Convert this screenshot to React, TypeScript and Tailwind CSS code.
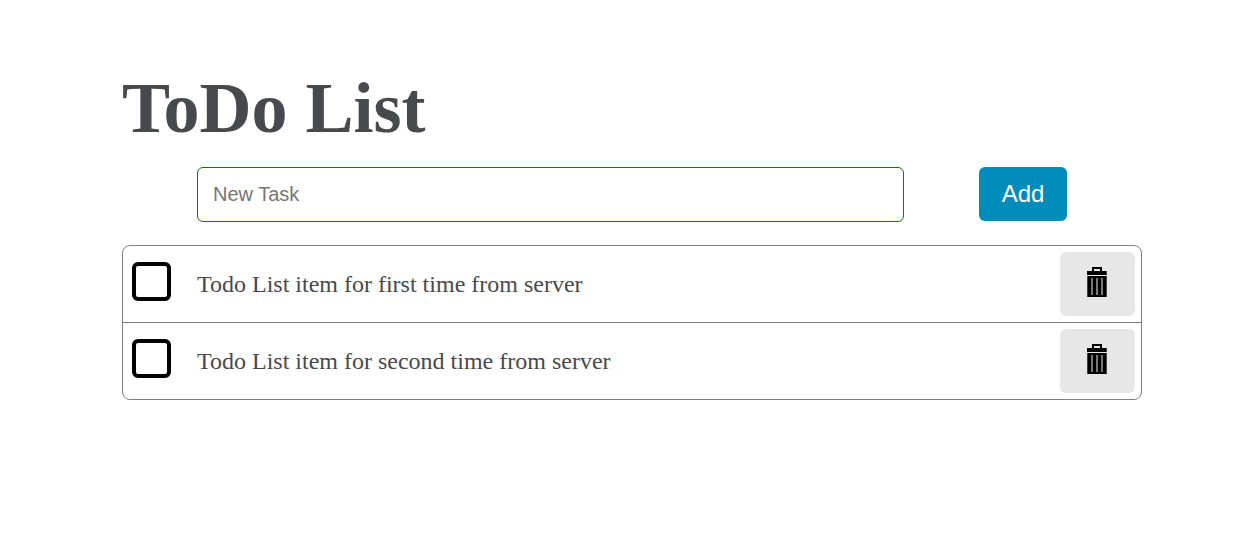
import { useState, type FormEvent } from "react";

type Todo = { id: number; text: string; done: boolean };

const initialTodos: Todo[] = [
  { id: 1, text: "Todo List item for first time from server", done: false },
  { id: 2, text: "Todo List item for second time from server", done: false },
];

function TrashIcon() {
  return (
    <svg width="20" height="30" viewBox="0 0 20 30" aria-hidden="true" shapeRendering="crispEdges">
      <path d="M5 0H15V4H20V8H0V4H5ZM7 2V4H13V2Z" fill="#000" fillRule="evenodd" />
      <rect x="0" y="9" width="20" height="21" fill="#000" />
      <path d="M4 11H6V28H4ZM9 11H11V28H9ZM14 11H16V28H14Z" fill="#777" />
      <path d="M0 9H1V30H0ZM19 4H20V8H19ZM19 9H20V30H19Z" fill="#444" />
    </svg>
  );
}

export default function App() {
  const [todos, setTodos] = useState(initialTodos);
  const [task, setTask] = useState("");

  const addTask = (event: FormEvent) => {
    event.preventDefault();
    const text = task.trim();
    if (!text) return;
    setTodos([...todos, { id: Date.now(), text, done: false }]);
    setTask("");
  };

  const toggle = (id: number) =>
    setTodos(todos.map((t) => (t.id === id ? { ...t, done: !t.done } : t)));

  return (
    <main className="min-h-screen bg-white pt-[72px] pr-[97px] pb-8 pl-[122px] font-['Liberation_Serif',serif] text-[#48494d]">
      <h1 className="text-7xl leading-[72px] font-bold">ToDo List</h1>

      <form onSubmit={addTask} className="mt-[23px] flex gap-[75px] px-[75px] font-['Liberation_Sans',sans-serif]">
        <input
          type="text"
          aria-label="New Task"
          placeholder="New Task"
          value={task}
          onChange={(e) => setTask(e.target.value)}
          className="h-[55px] min-w-0 flex-1 rounded-md border border-[green] px-[15px] text-xl placeholder:text-[#757575]"
        />
        <button type="submit" className="h-[54px] w-[88px] rounded-md bg-[#008cba] text-2xl text-white">
          Add
        </button>
      </form>

      <ul className="mt-[23px] divide-y divide-[gray] rounded-lg border border-[gray]">
        {todos.map((todo) => (
          <li key={todo.id} className="flex items-center py-1.5 pr-1.5 pl-[9px]">
            <input
              type="checkbox"
              id={`todo-${todo.id}`}
              checked={todo.done}
              onChange={() => toggle(todo.id)}
              className="mb-[5px] size-[39px] shrink-0 appearance-none rounded-md border-4 border-black checked:bg-black checked:shadow-[inset_0_0_0_4px_white]"
            />
            <label htmlFor={`todo-${todo.id}`} className="ml-[26px] min-w-0 flex-1 text-2xl">
              {todo.text}
            </label>
            <button
              type="button"
              aria-label={`Delete ${todo.text}`}
              onClick={() => setTodos(todos.filter((t) => t.id !== todo.id))}
              className="flex h-16 w-[75px] shrink-0 items-center justify-center rounded-md bg-[#e7e7e7] pr-px pb-1"
            >
              <TrashIcon />
            </button>
          </li>
        ))}
      </ul>
    </main>
  );
}
